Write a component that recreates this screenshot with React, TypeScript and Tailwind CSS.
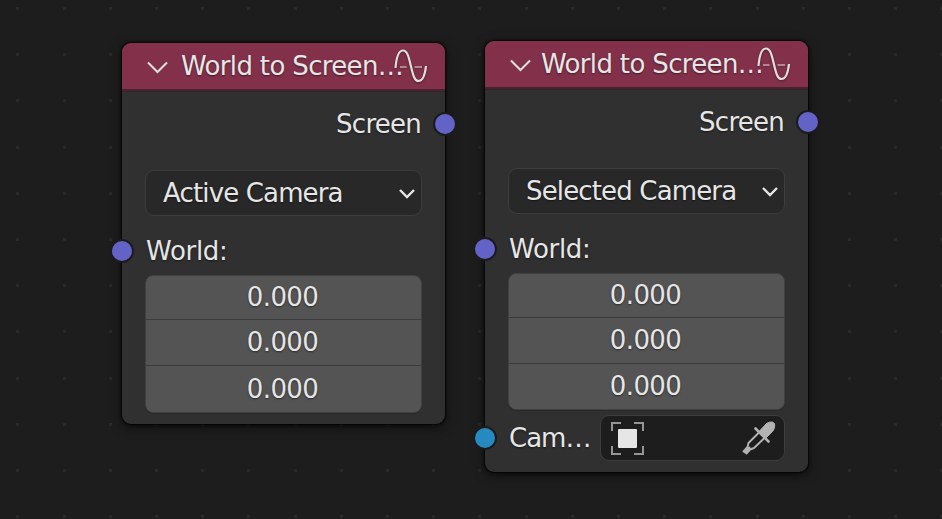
import type { ReactNode } from "react";

const columns = Array.from({ length: 21 }, (_, i) => Math.round(16.4 + i * 46.2));
const rows = Array.from({ length: 12 }, (_, i) => Math.round(7 + i * 46.2));

function GridDots() {
  return (
    <svg className="absolute inset-0" width="942" height="519" shapeRendering="crispEdges">
      {rows.map((y) =>
        columns.map((x) => <rect key={`${x}-${y}`} x={x} y={y} width="3" height="3" fill="#292929" />)
      )}
    </svg>
  );
}

function SineIcon() {
  return (
    <svg width="34" height="36" viewBox="0 0 34 36" fill="none" className="shrink-0 drop-shadow-[0_1px_1px_rgba(0,0,0,0.4)]">
      <path d="M6 19H12.500M20.500 19H28" stroke="#e6e6e6" strokeOpacity="0.5" strokeWidth="2" />
      <path
        d="M1.500 20C2.500 8 5 2.500 9 2.500C13.500 2.500 15 10 17 18.500C19 27 20.500 33 24.500 33C29 33 31 27 32 18"
        stroke="#dedede"
        strokeWidth="2.200"
      />
    </svg>
  );
}

function Socket({ side, color }: { side: "left" | "right"; color: string }) {
  return (
    <span
      className={`absolute top-1/2 size-[24px] -translate-y-1/2 rounded-full border-2 border-[#1b1b1b] ${color} ${
        side === "left" ? "-left-[12px]" : "-right-[12px]"
      }`}
    />
  );
}

function Vector({ lastRow }: { lastRow: string }) {
  return (
    <div className="mx-[23px] flex flex-col overflow-hidden rounded-[8px] border border-[#404040] bg-[#545454] text-center tracking-[-0.6px] shadow-[0_1px_0_#292929]">
      <div className="h-[44px] border-b border-[#3b3b3b] pr-[2px] leading-[42px]">0.000</div>
      <div className="h-[46px] border-b border-[#3b3b3b] pr-[2px] leading-[44px]">0.000</div>
      <div className={`pr-[2px] ${lastRow}`}>0.000</div>
    </div>
  );
}

interface NodeProps {
  place: string;
  titleGap: string;
  mode: string;
  lastRow: string;
  children?: ReactNode;
}

function Node({ place, titleGap, mode, lastRow, children }: NodeProps) {
  return (
    <section
      className={`absolute flex w-[323px] flex-col rounded-[9px] bg-[#303030] shadow-[0_0_0_1px_rgba(0,0,0,0.5),0_0_3px_1px_rgba(0,0,0,0.5),0_3px_12px_rgba(0,0,0,0.6)] ${place}`}
    >
      <header className="flex h-[48px] shrink-0 items-start rounded-t-[9px] bg-[#83314a] pl-[25px]">
        <svg width="22" height="14" viewBox="0 0 22 14" fill="none" className="mt-[18px] shrink-0">
          <path d="M1 1.500L10.500 11L20 1.500" stroke="#dedede" strokeWidth="2.100" />
        </svg>
        <h2 className={`w-[213px] shrink-0 leading-[46px] tracking-[-0.65px] whitespace-nowrap ${titleGap}`}>
          World to Screen…
        </h2>
        <span className="absolute top-[5px] left-[272px]">
          <SineIcon />
        </span>
      </header>
      <div className="-mt-[2px] h-[2px] shrink-0 bg-[#4d2030]" />
      <div className="h-px shrink-0 bg-[#292929]" />
      <div className="relative mt-[14px] h-[36px] pr-[24px] text-right leading-[36px] tracking-[-0.75px]">
        Screen
        <Socket side="right" color="bg-[#6363c7]" />
      </div>
      <div className="mx-[23px] mt-[28px] flex h-[46px] items-center justify-between rounded-[9px] border border-[#3d3d3d] bg-[#282828] pr-[6px] pl-[17px]">
        <span className="tracking-[-0.85px] whitespace-nowrap">{mode}</span>
        <svg width="16" height="12" viewBox="0 0 16 12" fill="none" className="mt-[2px]">
          <path d="M1 2L8 9L15 2" stroke="#e6e6e6" strokeWidth="2.400" />
        </svg>
      </div>
      <div className="relative mt-[17px] h-[36px] pl-[24px] leading-[36px] tracking-[-0.3px]">
        World:
        <Socket side="left" color="bg-[#6363c7]" />
      </div>
      <div className="h-[6px] shrink-0" />
      <Vector lastRow={lastRow} />
      {children}
    </section>
  );
}

function Eyedropper() {
  return (
    <svg width="35" height="34" viewBox="0 0 35 34" fill="none" stroke="#b3b3b3" strokeLinecap="round" strokeLinejoin="round">
      <path d="M18 10.500L25 3C28 0.500 31.500 0.500 33 2C34.500 4.500 33.500 8 31.500 10.500L24.500 17.500Z" fill="#b3b3b3" strokeWidth="1" />
      <path d="M14.500 7.500L27.500 20.500" strokeWidth="2.600" />
      <path
        d="M18 11.500L7.500 22L6.500 26L2.500 30.500M23.500 17L13 27L9 28.500L5.500 32.500M8.500 26.500L4 31.500"
        strokeWidth="1.900"
      />
    </svg>
  );
}

export default function App() {
  return (
    <main className="relative h-[519px] w-[942px] overflow-hidden bg-[#1d1d1d] font-['DejaVu_Sans',sans-serif] text-[26px] text-[#e6e6e6] [text-shadow:0_1px_2px_rgba(0,0,0,0.5)]">
      <GridDots />
      <Node
        place="left-[122px] top-[43px] h-[381px]"
        titleGap="ml-[12px]"
        mode="Active Camera"
        lastRow="h-[46px] leading-[46px]"
      />
      <Node
        place="left-[485px] top-[41px] h-[431px]"
        titleGap="ml-[9px]"
        mode="Selected Camera"
        lastRow="h-[45px] leading-[44px]"
      >
        <div className="relative mt-[5px] flex h-[46px] items-center pr-[23px] pl-[24px]">
          <span className="w-[91px] tracking-[-1px] whitespace-nowrap">Cam…</span>
          <div className="flex h-[46px] flex-1 items-center justify-between rounded-[9px] border border-[#3d3d3d] bg-[#1d1d1d] pr-[8px] pl-[10px]">
            <svg width="33" height="33" viewBox="0 0 33 33" fill="none">
              <path d="M1 9V1H10M23 1H32V9M32 24V32H23M10 32H1V24" stroke="#959595" strokeWidth="2" />
              <rect x="7" y="7" width="19" height="19" rx="1" fill="#e6e6e6" />
            </svg>
            <Eyedropper />
          </div>
          <Socket side="left" color="bg-[#268ac0]" />
        </div>
      </Node>
    </main>
  );
}
